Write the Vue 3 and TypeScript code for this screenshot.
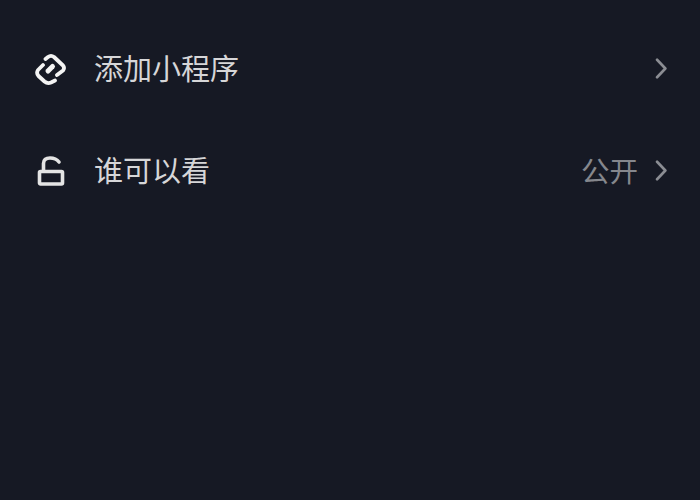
<script setup lang="ts">
interface Row { label: string; value?: string; icon: 'link' | 'lock' }
const rows: Row[] = [
  { label: '添加小程序', icon: 'link' },
  { label: '谁可以看', value: '公开', icon: 'lock' },
]
</script>

<template>
  <div class="page">
    <div v-for="row in rows" :key="row.label" class="row">
      <svg v-if="row.icon === 'link'" class="icon" viewBox="0 0 32 32" fill="none" stroke="#f4f4f4" stroke-width="3.800" stroke-linecap="round" stroke-linejoin="round">
        <path d="M11.500 6 L14 4 Q17 1.800 20 4 L29 12.500 Q31 15 29 17.500 L23 22" />
        <path d="M9 12 L4 17 Q2 20 4.500 23 L10.500 28.500 Q13.500 31 17 29.500 L21 27.500" />
        <path d="M14 18 L18.500 13.500" stroke-width="5" />
      </svg>
      <svg v-else class="icon" viewBox="0 0 32 32" fill="none" stroke="#e4e4e4" stroke-width="3.600" stroke-linecap="round" stroke-linejoin="round">
        <rect x="5.500" y="16.500" width="23" height="12.500" rx="1" />
        <path d="M9.500 15.500 V8.500 Q9.500 3 16 3 Q22 3 25 7" />
      </svg>
      <span class="label">{{ row.label }}</span>
      <span v-if="row.value" class="value">{{ row.value }}</span>
      <svg class="chev" viewBox="0 0 16 24" fill="none" stroke="#8b8d93" stroke-width="3" stroke-linecap="round" stroke-linejoin="round">
        <path d="M3.500 2 L13 12 L3.500 22" />
      </svg>
    </div>
  </div>
</template>

<style>
html, body { margin: 0; background: #161924; }
</style>

<style scoped>
.page {
  width: 700px;
  height: 500px;
  background: #161924;
  padding: 18px 32px 0 34px;
  box-sizing: border-box;
  display: flex;
  flex-direction: column;
  font-family: "Noto Sans CJK SC", "Noto Sans", sans-serif;
  overflow: hidden;
}
.row {
  display: flex;
  align-items: center;
  height: 102px;
}
.icon { width: 32px; height: 32px; flex: none; }
.label {
  margin-left: 28px;
  padding-bottom: 4px;
  font-size: 29px;
  color: #d6d6d8;
  flex: 1;
}
.value {
  padding-bottom: 4px;
  font-size: 28.500px;
  color: #85878d;
  margin-right: 16px;
}
.chev { width: 14px; height: 21px; flex: none; margin-bottom: 2px; }
</style>
